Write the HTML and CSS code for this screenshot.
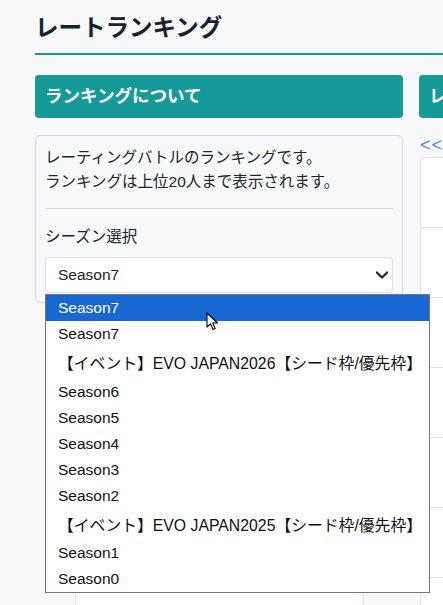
FILE: index.html
```html
<!DOCTYPE html>
<html lang="ja">
<head>
    <meta charset="UTF-8">
    <title>レートランキング</title>
    <link rel="stylesheet" href="styles.css">
</head>
<body>

<div class="page">
    <h1 class="title">レートランキング</h1>

    <div class="cols">
        <!-- 左: 説明とシーズン選択 -->
        <div class="col">
            <h2 class="head">ランキングについて</h2>
            <div class="card">
                <p class="des">レーティングバトルのランキングです。<br>ランキングは上位20人まで表示されます。</p>
                <hr class="line">
                <label class="name">シーズン選択</label>
                <div class="pick">
                    <div class="select">
                        <span>Season7</span>
                        <svg class="chev" width="12" height="8" viewBox="1 4 14 8"><path d="M2 5l6 6 6-6" fill="none" stroke="#222" stroke-width="2.6" stroke-linecap="round" stroke-linejoin="round"/></svg>
                    </div>
                    <ul class="list">
                        <li class="on">Season7</li>
                        <li>Season7</li>
                        <li class="ev">【イベント】EVO JAPAN2026【シード枠/優先枠】</li>
                        <li>Season6</li>
                        <li>Season5</li>
                        <li>Season4</li>
                        <li>Season3</li>
                        <li>Season2</li>
                        <li class="ev">【イベント】EVO JAPAN2025【シード枠/優先枠】</li>
                        <li>Season1</li>
                        <li>Season0</li>
                    </ul>
                    <!-- マウスカーソル -->
                    <svg class="cursor" width="13" height="19" viewBox="0 0 13 19"><path d="M1 1 L1 15 L4.5 11.8 L7 17.5 L9.2 16.6 L6.8 11 L11.5 11 Z" fill="#fff" stroke="#000" stroke-width="1.1" stroke-linejoin="round"/></svg>
                </div>
            </div>
            <div class="board"></div>
        </div>

        <!-- 右: ランキング表 -->
        <div class="col">
            <h2 class="head">レーティングランキング</h2>
            <a class="back">&lt;&lt;</a>
            <div class="table">
                <div class="row"></div>
                <div class="row"></div>
                <div class="row"></div>
                <div class="row"></div>
                <div class="row"></div>
                <div class="row"></div>
                <div class="row"></div>
            </div>
        </div>
    </div>
</div>

</body>
</html>
```

FILE: styles.css
```css
*{
    margin: 0;
    padding: 0;
    box-sizing: border-box;
}
html,body{
    height: 100%;
    overflow: hidden;
}
body{
    background-color: #f8f9fa;
    color: #212529;
    font-family: "Liberation Sans", "Noto Sans CJK JP", sans-serif;
    font-size: 16px;
    line-height: 1.5;
}
.page{
    width: 900px;
    padding-left: 35px;
}
.title{
    margin-top: 14px;
    padding-bottom: 11px;
    font-size: 23.5px;
    line-height: 28px;
    font-weight: bold;
    color: #17222e;
    border-bottom: 2px solid #169a99;
}
.cols{
    display: grid;
    grid-template-columns: 368px 368px;
    gap: 16px;
    margin-top: 20px;
}
.head{
    height: 43px;
    display: flex;
    align-items: center;
    padding: 0 10px;
    background-color: #169a99;
    color: #fff;
    font-size: 17.5px;
    font-weight: bold;
    border-radius: 4px;
    white-space: nowrap;
    overflow: hidden;
}
.card{
    margin-top: 17px;
    padding: 10px 9px 9px;
    border: 1px solid #d6d9df;
    border-radius: 5px;
}
.des{
    font-size: 15.5px;
    line-height: 24px;
}
.line{
    border: 0;
    border-top: 1px solid #dcdde0;
    margin: 14px 0 16px;
}
.name{
    display: block;
    font-size: 15.5px;
    line-height: 24px;
}
.pick{
    position: relative;
    margin-top: 8px;
}
.select{
    height: 36px;
    display: flex;
    align-items: center;
    justify-content: space-between;
    padding: 0 4px 0 12px;
    background-color: #fff;
    border: 1px solid #dee2e6;
    border-radius: 4px;
    font-size: 15.5px;
}
.chev{
    display: block;
}
.list{
    position: absolute;
    left: 0;
    top: 37px;
    width: 385px;
    list-style: none;
    background-color: #fff;
    border: 1px solid #767676;
    font-size: 15.5px;
    color: #111;
    z-index: 2;
}
.list li{
    height: 26px;
    line-height: 26px;
    padding-left: 12px;
    white-space: nowrap;
}
.list .on{
    background-color: #1967d2;
    color: #fff;
}
.list .ev{
    height: 31.5px;
    line-height: 34px;
    font-size: 15.8px;
}
.cursor{
    position: absolute;
    left: 161px;
    top: 55px;
    z-index: 3;
}
.board{
    width: 289px;
    height: 400px;
    margin: 16px auto 0;
    background-color: #fff;
    border: 1px solid #dee2e6;
}
.back{
    display: block;
    margin-top: 17px;
    padding-left: 1px;
    height: 20px;
    line-height: 20px;
    color: #5a82f0;
    font-size: 18px;
    letter-spacing: 1px;
}
.table{
    margin-top: 2px;
    margin-left: 1px;
    background-color: #fff;
    border: 1px solid #e3e4e8;
    border-radius: 5px;
}
.row{
    height: 70px;
    border-bottom: 1px solid #e3e4e8;
}
```
